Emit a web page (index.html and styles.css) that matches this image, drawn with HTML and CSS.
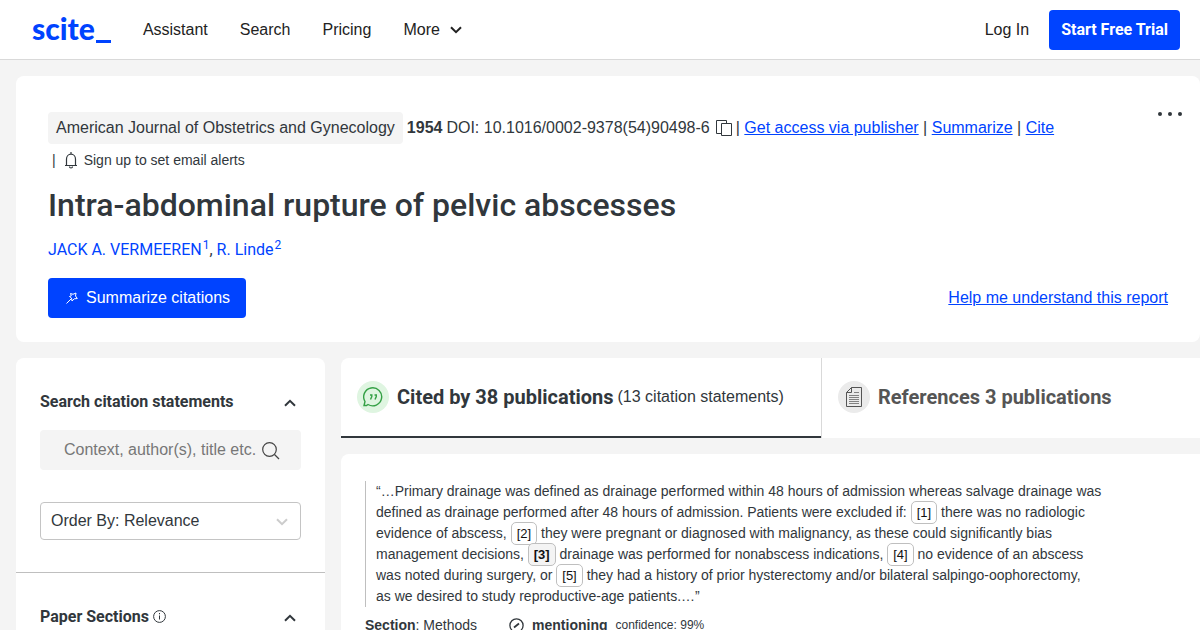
FILE: index.html
```
<!DOCTYPE html>
<html lang="en">
<head>
    <meta charset="utf-8">
    <title>Intra-abdominal rupture of pelvic abscesses</title>
    <link rel="stylesheet" href="styles.css">
</head>
<body>
    <header class="navbar">
        <a href="#" class="logo">scite<span class="logo-bar"></span></a>
        <nav class="nav-links">
            <a href="#">Assistant</a>
            <a href="#">Search</a>
            <a href="#">Pricing</a>
            <button class="more-button">More
                <svg width="12" height="8" viewBox="0 0 12 8"><path d="M1 1.200l5 5 5-5" fill="none" stroke="currentColor" stroke-width="2"/></svg>
            </button>
        </nav>
        <a href="#" class="login">Log In</a>
        <a href="#" class="trial-button">Start Free Trial</a>
    </header>

    <section class="paper">
        <button class="dots" aria-label="More options">
            <svg width="24" height="4" viewBox="0 0 24 4" fill="currentColor"><circle cx="2" cy="2" r="2"/><circle cx="12" cy="2" r="2"/><circle cx="22" cy="2" r="2"/></svg>
        </button>
        <div class="paper-meta">
            <span class="journal">American Journal of Obstetrics and Gynecology</span>
            <strong>1954</strong>
            <span>DOI: 10.1016/0002-9378(54)90498-6</span>
            <button class="copy-button" aria-label="Copy DOI">
                <svg width="16" height="16" viewBox="0 0 16 16" fill="none" stroke="currentColor"><path d="M5 13.500H.5V.5h10V3"/><path d="M5.500 3.500h10v12h-10z"/></svg>
            </button>
            <span class="access">| <a href="#">Get access via publisher</a> | <a href="#">Summarize</a> | <a href="#">Cite</a></span>
        </div>
        <div class="alerts">
            <span>|</span>
            <button class="alert-button">
                <svg width="14" height="17" viewBox="0 0 14 17" fill="none" stroke="currentColor" stroke-width="1.200"><path d="M1 13.500h12M2.500 13.500V7a4.500 4.900 0 0 1 9 0v6.500M7 2V0M5.500 14.500a1.500 1.500 0 0 0 3 0"/></svg>
                Sign up to set email alerts
            </button>
        </div>
        <h1>Intra-abdominal rupture of pelvic abscesses</h1>
        <div class="authors"><a href="#">JACK A. VERMEEREN<sup>1</sup></a>, <a href="#">R. Linde<sup>2</sup></a></div>
        <div class="paper-actions">
            <button class="summarize-button">
                <svg width="12" height="12" viewBox="0 0 12 12" fill="none" stroke="currentColor"><path d="M.5 11.500L5 7M4.500 1.500l2.500.8 3-1.300-.5 3 1.800 2.500-3 .3L6 9 5.500 6 3.500 4.500l1.800-.7z"/></svg>
                Summarize citations
            </button>
            <a href="#">Help me understand this report</a>
        </div>
    </section>

    <div class="content">
        <aside class="sidebar">
            <div class="filter">
                <div class="filter-title">
                    <label for="citation-search">Search citation statements</label>
                    <button aria-label="Collapse search">
                        <svg width="12" height="8" viewBox="0 0 12 8"><path d="M1 6.800l5-5 5 5" fill="none" stroke="currentColor" stroke-width="2"/></svg>
                    </button>
                </div>
                <div class="search-box">
                    <input type="text" id="citation-search" placeholder="Context, author(s), title etc.">
                    <svg width="18" height="18" viewBox="0 0 18 18" fill="none" stroke="currentColor" stroke-width="1.200"><circle cx="7.500" cy="7.500" r="6.800"/><path d="M12.500 12.500l4.500 4.500"/></svg>
                </div>
                <div class="order-box">
                    <select aria-label="Order by">
                        <option>Order By: Relevance</option>
                        <option>Order By: Newest First</option>
                        <option>Order By: Oldest First</option>
                    </select>
                    <svg width="12" height="8" viewBox="0 0 12 8"><path d="M1 1.200l5 5 5-5" fill="none" stroke="currentColor" stroke-width="2"/></svg>
                </div>
            </div>
            <div class="filter">
                <div class="filter-title">
                    <h2>Paper Sections
                        <svg width="13" height="13" viewBox="0 0 13 13" fill="none" stroke="currentColor"><circle cx="6.500" cy="6.500" r="5.900"/><path d="M6.500 5.500v4M6.500 3v1.300"/></svg>
                    </h2>
                    <button aria-label="Collapse paper sections">
                        <svg width="12" height="8" viewBox="0 0 12 8"><path d="M1 6.800l5-5 5 5" fill="none" stroke="currentColor" stroke-width="2"/></svg>
                    </button>
                </div>
            </div>
        </aside>

        <main class="results">
            <div class="tabs">
                <button class="tab tab-active">
                    <span class="tab-icon">
                        <svg width="20" height="20" viewBox="0 0 20 20" fill="none" stroke="currentColor" stroke-width="1.400"><path d="M1 18.500h2.500l1.500-1A9 9 0 1 0 2 14.500z"/><path d="M7 8h1.800v1.500L7.500 12.500M11.500 8h1.800v1.500L12 12.500"/></svg>
                    </span>
                    <span class="tab-title">Cited by 38 publications</span>
                    <span>(13 citation statements)</span>
                </button>
                <button class="tab">
                    <span class="tab-icon">
                        <svg width="16" height="20" viewBox="0 0 16 20" fill="none" stroke="currentColor"><path d="M5.500.5h10v19H.5v-14zv5h-5"/><path d="M8 5.500h5M3 8.500h10M3 10.500h10M3 12.500h10M3 14.500h10M3 16.500h10" stroke-opacity=".7"/></svg>
                    </span>
                    <span class="tab-title">References 3 publications</span>
                </button>
            </div>

            <article class="citation">
                <blockquote>
                    “…Primary drainage was defined as drainage performed within 48 hours of admission whereas salvage drainage was<br>
                    defined as drainage performed after 48 hours of admission. Patients were excluded if: <button class="ref">[1]</button> there was no radiologic<br>
                    evidence of abscess, <button class="ref">[2]</button> they were pregnant or diagnosed with malignancy, as these could significantly bias<br>
                    management decisions, <button class="ref ref-current">[3]</button> drainage was performed for nonabscess indications, <button class="ref">[4]</button> no evidence of an abscess<br>
                    was noted during surgery, or <button class="ref">[5]</button> they had a history of prior hysterectomy and/or bilateral salpingo-oophorectomy,<br>
                    as we desired to study reproductive-age patients.…”
                </blockquote>
                <div class="citation-info">
                    <span><strong>Section</strong>: Methods</span>
                    <span class="mention">
                        <svg width="15" height="15" viewBox="0 0 15 15" fill="none" stroke="currentColor" stroke-width="1.300"><circle cx="7.500" cy="7.500" r="6.600"/><path d="M5 9.500l5-4" stroke-width="1.800"/></svg>
                        <strong>mentioning</strong>
                        <small>confidence: 99%</small>
                    </span>
                </div>
            </article>
        </main>
    </div>
</body>
</html>
```
FILE: styles.css
```
* {
    box-sizing: border-box;
}

body {
    margin: 0;
    background-color: #f4f4f4;
    color: #31373c;
    font-family: "Liberation Sans", Arial, sans-serif;
    font-size: 16px;
    line-height: 24px;
    overflow: hidden;
}

a {
    color: #0043ff;
}

button {
    border: none;
    background: none;
    padding: 0;
    color: inherit;
    font: inherit;
    cursor: pointer;
}

svg {
    flex-shrink: 0;
}

h1,
.authors,
.trial-button,
.filter-title,
.tab-title {
    font-family: Roboto, Arial, sans-serif;
}

/* Top navigation */
.navbar {
    display: flex;
    align-items: center;
    height: 60px;
    padding: 0 20px 0 32px;
    background-color: white;
    border-bottom: 1px solid #d9d9d9;
}

.navbar a {
    text-decoration: none;
}

.logo {
    font-family: Lato, sans-serif;
    font-size: 30px;
    font-weight: 900;
    margin-right: 32px;
}

.logo-bar {
    display: inline-block;
    width: 15px;
    height: 3px;
    margin-left: 1px;
    background-color: #0043ff;
    vertical-align: -3px;
}

.nav-links {
    display: flex;
    gap: 32px;
    flex: 1;
}

.nav-links a,
.more-button,
.navbar .login {
    color: #222;
}

.more-button {
    display: flex;
    align-items: center;
    gap: 10px;
}

.trial-button {
    margin-left: 20px;
    padding: 8px 12px;
    border-radius: 4px;
    background-color: #0043ff;
    color: white;
    font-weight: bold;
}

/* Paper header */
.paper {
    position: relative;
    margin: 16px 0 16px 16px;
    padding: 36px 32px 24px;
    background-color: white;
    border-radius: 8px;
}

.dots {
    display: flex;
    position: absolute;
    top: 36px;
    right: 18px;
}

.paper-meta {
    display: flex;
    align-items: center;
    gap: 4px;
    line-height: 32px;
}

.journal {
    padding: 0 8px;
    background-color: #f4f4f4;
    border-radius: 4px;
}

.copy-button {
    display: flex;
    margin-left: 2px;
}

.alerts {
    display: flex;
    gap: 8px;
    padding-left: 4px;
    font-size: 14px;
    line-height: 32px;
}

.alert-button {
    display: flex;
    align-items: center;
    gap: 6px;
}

h1 {
    margin: 8px 0;
    font-size: 32px;
    font-weight: 500;
    line-height: 42px;
}

.authors {
    line-height: 32px;
    margin-bottom: 12px;
}

.authors a {
    text-decoration: none;
}

sup {
    font-size: 12px;
    line-height: 0;
    margin-left: 1px;
}

.paper-actions {
    display: flex;
    align-items: center;
    justify-content: space-between;
}

.summarize-button {
    display: flex;
    align-items: center;
    gap: 8px;
    padding: 8px 16px 8px 18px;
    border-radius: 4px;
    background-color: #0043ff;
    color: white;
}

/* Filters */
.content {
    display: flex;
    align-items: flex-start;
    gap: 16px;
    padding-left: 16px;
}

.sidebar {
    flex: 0 0 309px;
    background-color: white;
    border-radius: 8px;
}

.filter {
    padding: 32px 24px;
    border-bottom: 1px solid #bfbfbf;
}

.filter-title {
    display: flex;
    align-items: center;
    justify-content: space-between;
    padding-right: 5px;
    font-weight: bold;
}

.filter-title h2 {
    margin: 0;
    font-size: 16px;
}

.filter-title h2 svg {
    vertical-align: -1px;
}

.search-box {
    position: relative;
    margin: 16px 0 32px;
}

.search-box input {
    width: 100%;
    height: 40px;
    padding: 0 44px 0 24px;
    border: none;
    border-radius: 4px;
    background-color: #f4f4f4;
    font: inherit;
}

.search-box input::placeholder {
    color: #777;
}

.search-box svg {
    position: absolute;
    top: 12px;
    right: 21px;
    color: #444;
}

.order-box {
    position: relative;
}

.order-box select {
    display: block;
    width: 100%;
    height: 38px;
    padding: 0 10px;
    appearance: none;
    border: 1px solid #c4c4c4;
    border-radius: 4px;
    background-color: white;
    color: #31373c;
    font: inherit;
}

.order-box svg {
    position: absolute;
    top: 16px;
    right: 13px;
    color: #ccc;
}

/* Tabs */
.results {
    flex: 1;
    min-width: 0;
}

.tabs {
    display: flex;
    height: 80px;
    margin-bottom: 16px;
    background-color: white;
    border-radius: 8px 0 0 0;
}

.tab {
    display: flex;
    flex: 1;
    align-items: center;
    gap: 4px;
    padding: 0 16px 2px;
    border-left: 1px solid #d9d9d9;
    color: #555;
    white-space: nowrap;
}

.tab-active {
    flex: 0 0 480px;
    padding-bottom: 0;
    border-left: none;
    border-bottom: 2px solid #31373c;
    color: #31373c;
}

.tab-icon {
    display: flex;
    align-items: center;
    justify-content: center;
    width: 32px;
    height: 32px;
    margin-right: 4px;
    border-radius: 50%;
    background-color: #ebebeb;
}

.tab-active .tab-icon {
    background-color: #dff5e1;
    color: #34a045;
}

.tab-title {
    font-size: 20px;
    font-weight: bold;
}

/* Citation statements */
.citation {
    padding: 27px 24px;
    background-color: white;
    border-radius: 8px 0 0 0;
    font-size: 14px;
    line-height: 21px;
}

blockquote {
    margin: 0 0 8px;
    padding-left: 10px;
    border-left: 1px solid #bfbfbf;
}

.ref {
    height: 23px;
    margin: -1px 0;
    padding: 0 5px;
    border: 1px solid #bfbfbf;
    border-radius: 5px;
    color: #111;
    font-size: 13px;
    line-height: 21px;
}

.ref-current {
    background-color: #f4f4f4;
    font-weight: bold;
}

.citation-info {
    display: flex;
    gap: 32px;
}

.mention {
    display: flex;
    align-items: center;
    gap: 8px;
}

.mention small {
    font-size: 12px;
}
```
